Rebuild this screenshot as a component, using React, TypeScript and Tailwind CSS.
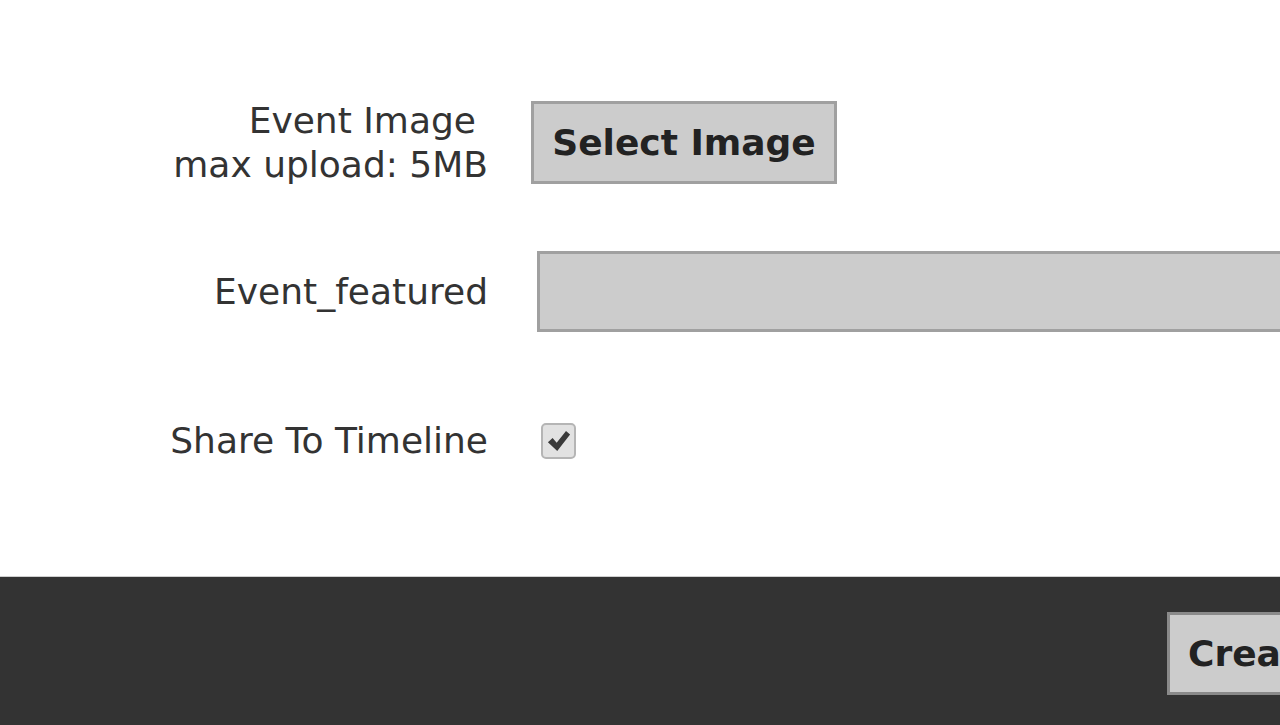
import { useState } from 'react';

const font = { fontFamily: '"DejaVu Sans", Verdana, sans-serif' };

const CreateEventForm = () => {
  const [shareToTimeline, setShareToTimeline] = useState(true);

  return (
    <div className="w-[1280px] h-[725px] overflow-hidden bg-white flex flex-col text-[#333]" style={font}>
      {/* 폼 영역 */}
      <div className="flex-1 pt-[68px]">
        {/* 이미지 업로드 */}
        <div className="h-[149px] flex items-center">
          <div className="w-[488px] shrink-0 text-right text-[36px] leading-[44px]">
            <div className="pr-[12px]">Event Image</div>
            <div>max upload: 5MB</div>
          </div>
          <div className="ml-[43px] shrink-0">
            <button className="h-[83px] w-[306px] bg-[#cccccc] border-[3px] border-[#a0a0a0] text-[36px] font-bold text-[#222] whitespace-nowrap">
              Select Image
            </button>
          </div>
        </div>

        {/* 추천 이벤트 */}
        <div className="h-[149px] flex items-center">
          <div className="w-[488px] shrink-0 text-right text-[36px]">Event_featured</div>
          <div className="ml-[49px] shrink-0">
            <input
              type="text"
              className="block w-[800px] h-[81px] bg-[#cccccc] border-[3px] border-[#a0a0a0] outline-none"
            />
          </div>
        </div>

        {/* 타임라인 공유 */}
        <div className="h-[149px] flex items-center">
          <div className="w-[488px] shrink-0 text-right text-[36px]">Share To Timeline</div>
          <div className="ml-[53px] shrink-0">
            <button
              onClick={() => setShareToTimeline(!shareToTimeline)}
              className="w-[35px] h-[36px] rounded-[5px] border-2 border-[#b5b5b5] bg-[#e2e2e2] flex items-center justify-center"
            >
              {shareToTimeline && (
                <svg viewBox="0 0 24 24" className="w-[28px] h-[28px]">
                  <path d="M2.5 13 L6.5 9.5 L10 13.5 L18 3.5 L21.5 6.5 L10.5 20.5 Z" fill="#3a3a3a" />
                </svg>
              )}
            </button>
          </div>
        </div>
      </div>

      {/* 하단 바 */}
      <div className="h-[149px] shrink-0 bg-[#333333] border-t border-[#cfcfcf] flex justify-end pt-[35px]">
        <div className="w-[113px] shrink-0">
          <button className="h-[83px] px-[18px] bg-[#cccccc] border-[3px] border-[#8a8a8a] text-[36px] font-bold text-[#222] whitespace-nowrap">
            Create
          </button>
        </div>
      </div>
    </div>
  );
};

export default CreateEventForm;
